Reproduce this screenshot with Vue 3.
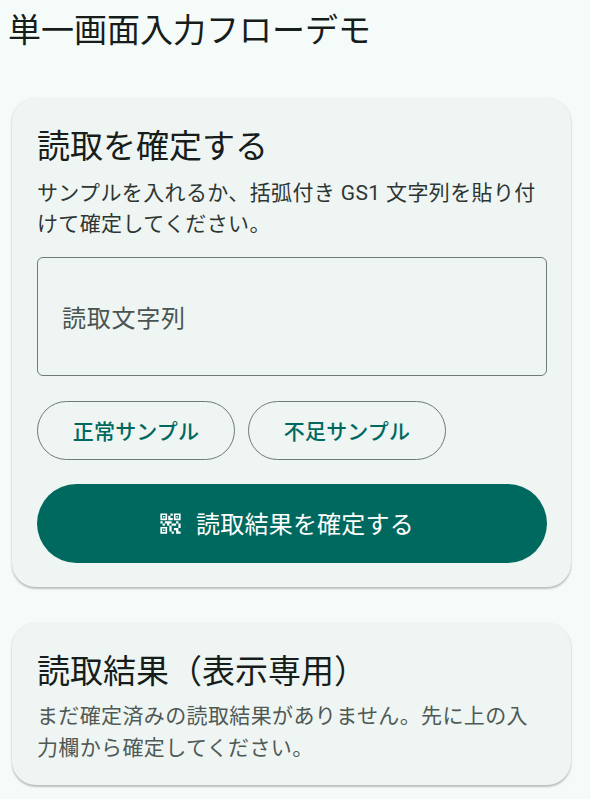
<script setup>
const samples = ['正常サンプル', '不足サンプル']
</script>

<template>
  <main class="page">
    <h1 class="page-title">単一画面入力フローデモ</h1>
    <section class="card first">
      <h2 class="card-title">読取を確定する</h2>
      <p class="body dark">サンプルを入れるか、括弧付き GS1 文字列を貼り付けて確定してください。</p>
      <div class="field"><span class="field-label">読取文字列</span></div>
      <div class="chips">
        <button v-for="s in samples" :key="s" class="chip" type="button">{{ s }}</button>
      </div>
      <button class="confirm" type="button">
        <svg class="qr" viewBox="0 0 24 24" fill="currentColor" aria-hidden="true">
          <path d="M15,21h-2v-2h2V21z M13,14h-2v5h2V14z M21,12h-2v4h2V12z M19,10h-2v2h2V10z M7,12H5v2h2V12z M5,10H3v2h2V10z M12,5h2V3h-2V5z M4.5,4.5v3h3v-3H4.5z M9,9H3V3h6V9z M4.5,16.5v3h3v-3H4.5z M9,21H3v-6h6V21z M16.5,4.5v3h3v-3H16.5z M21,9h-6V3h6V9z M19,19v-3l-4,0v2h2v3h4v-2H19z M17,12l-4,0v2h4V12z M13,10H7v2h2v2h2v-2h2V10z M14,9V7h-2V5h-2v4L14,9z M6.75,5.25h-1.5v1.5h1.5V5.25z M6.75,17.25h-1.5v1.5h1.5V17.25z M18.75,5.25h-1.5v1.5h1.5V5.25z" />
        </svg>
        <span>読取結果を確定する</span>
      </button>
    </section>
    <section class="card second">
      <h2 class="card-title">読取結果（表示専用）</h2>
      <p class="body muted">まだ確定済みの読取結果がありません。先に上の入力欄から確定してください。</p>
    </section>
  </main>
</template>

<style>
html, body { margin: 0; background: #f5fbf8; }
</style>

<style scoped>
.page {
  box-sizing: border-box;
  height: 799px;
  overflow: hidden;
  padding: 0 19px 0 12px;
  background: #f5fbf8;
  font-family: Roboto, "Noto Sans CJK JP", sans-serif;
  color: #171d1b;
}
.page-title {
  margin: 0 0 0 -4px;
  padding-top: 6px;
  height: 50px;
  font-size: 33px;
  line-height: 50px;
  font-weight: 400;
}
.card {
  box-sizing: border-box;
  border-radius: 24px;
  background: #eff5f2;
  padding: 25px 24px 0 25px;
  box-shadow: 0 1.5px 2px rgba(0, 0, 0, 0.2), 0 1px 3px rgba(0, 0, 0, 0.08);
}
.first { margin-top: 42px; height: 489px; }
.second { margin-top: 36px; height: 162px; }
.card-title {
  margin: 0;
  font-size: 33px;
  line-height: 48px;
  font-weight: 400;
}
.body {
  margin: 0;
  font-size: 21px;
  line-height: 31.5px;
  letter-spacing: 0.375px;
}
.dark { margin-top: 6.5px; color: #2e3634; }
.muted { margin-top: 5px; color: #4f5956; }
.field {
  box-sizing: border-box;
  display: flex;
  align-items: center;
  height: 119px;
  margin-top: 16.5px;
  padding-left: 24px;
  border: 1.5px solid #6f7976;
  border-radius: 6px;
}
.field-label {
  font-size: 24px;
  letter-spacing: 0.75px;
  color: #4a5451;
}
.chips {
  display: flex;
  gap: 13px;
  margin-top: 25px;
}
.chip {
  box-sizing: border-box;
  width: 198px;
  height: 59px;
  border: 1.5px solid #6f7976;
  border-radius: 30px;
  background: transparent;
  color: #00695f;
  font: 500 21px/1 Roboto, "Noto Sans CJK JP", sans-serif;
  letter-spacing: 0.15px;
  padding: 3px 0 0;
}
.confirm {
  box-sizing: border-box;
  display: flex;
  align-items: center;
  justify-content: center;
  gap: 12px;
  width: 100%;
  height: 79px;
  margin-top: 24px;
  border: 0;
  border-radius: 40px;
  background: #00695f;
  color: #fff;
  font: 400 24px/1 Roboto, "Noto Sans CJK JP", sans-serif;
  letter-spacing: 0.2px;
  padding: 0 13px 0 0;
}
.confirm span { padding-top: 2px; }
.qr { width: 27px; height: 27px; flex: none; }
</style>
